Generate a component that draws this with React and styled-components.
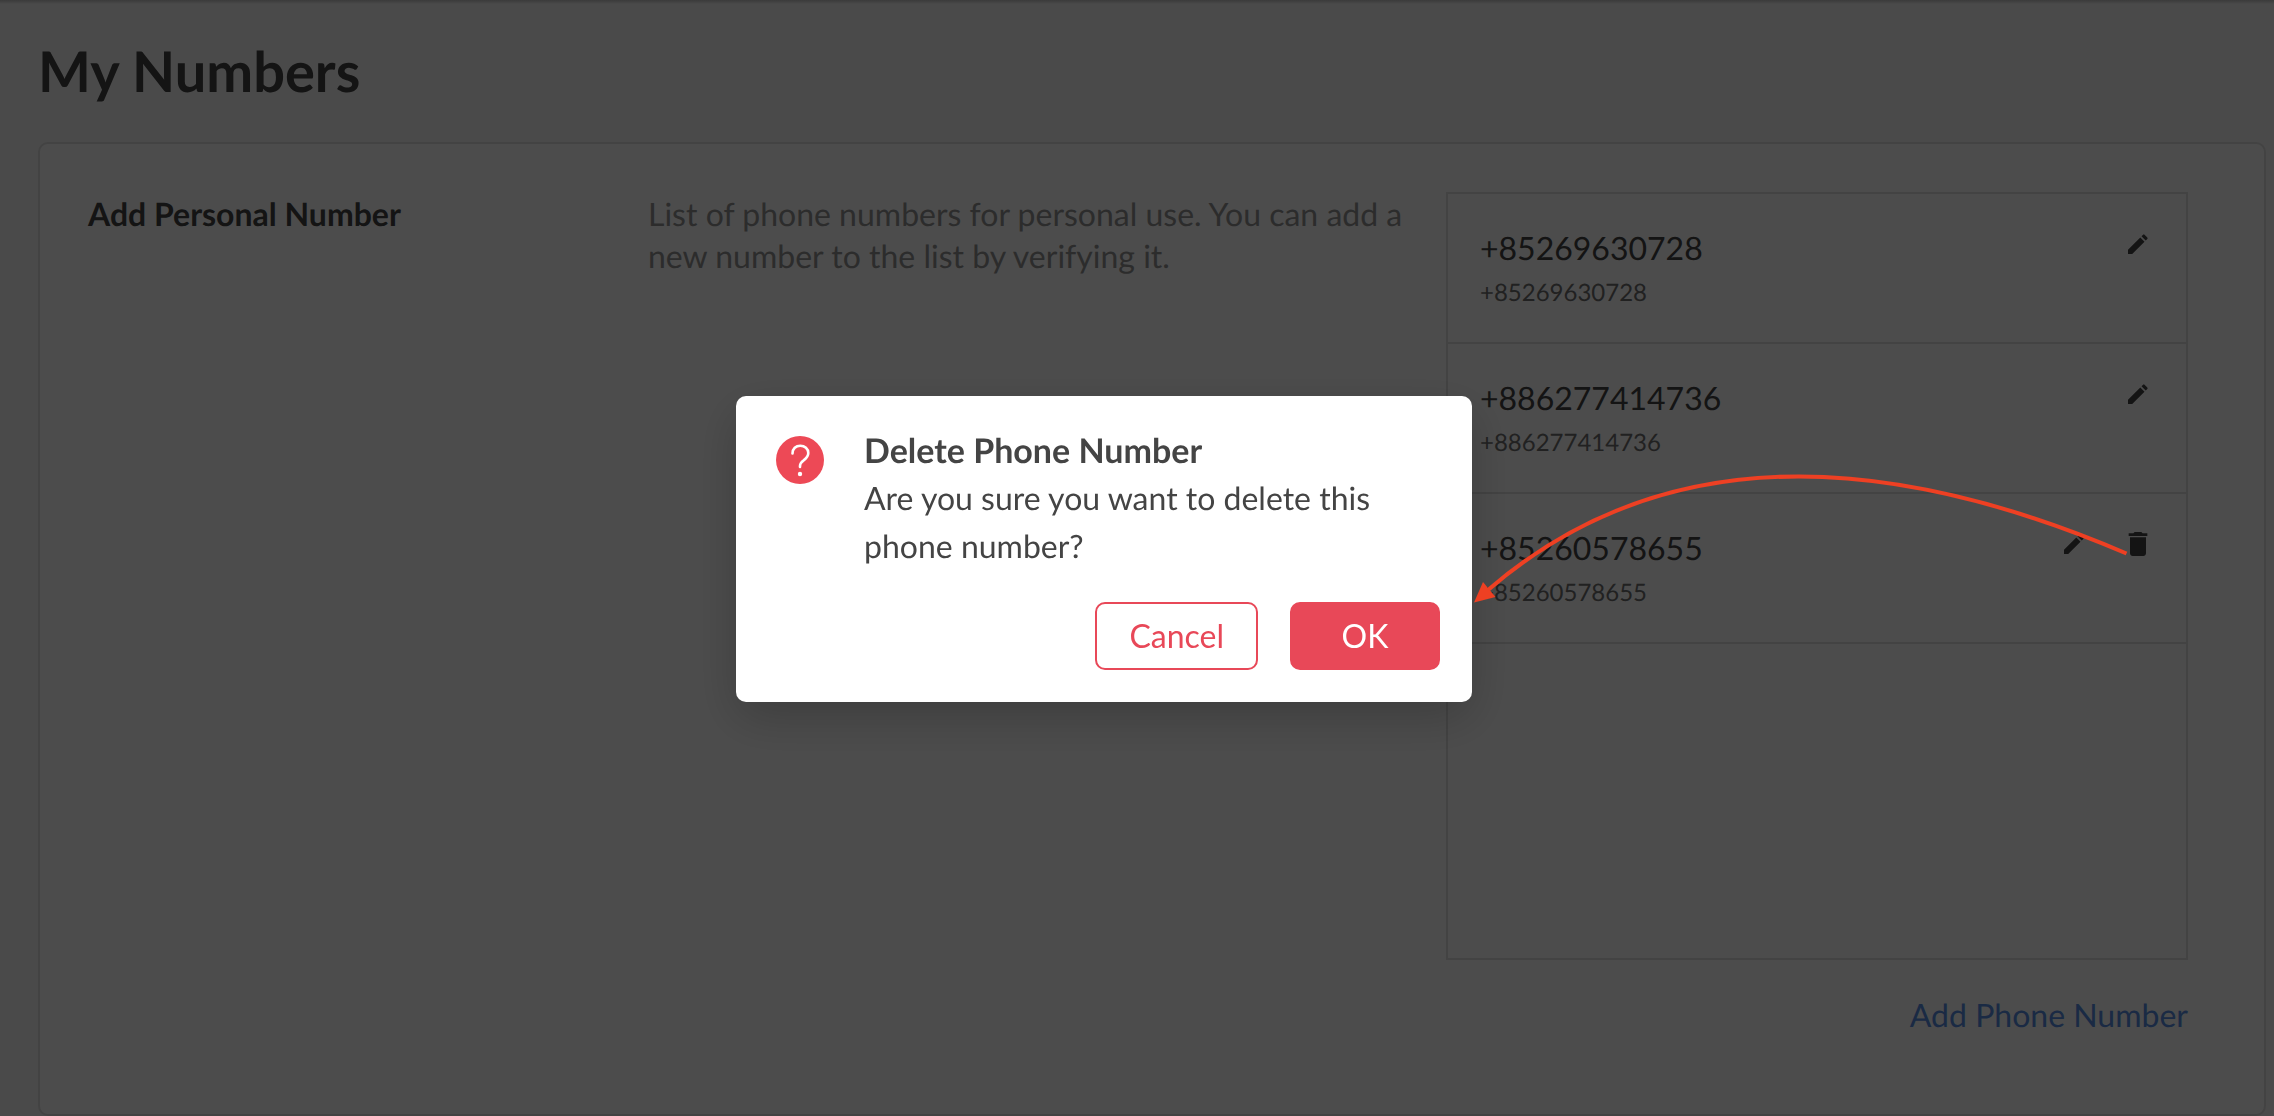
import React from "react";
import styled, { createGlobalStyle } from "styled-components";

const Global = createGlobalStyle`
  *, *::before, *::after { box-sizing: border-box; }
  body {
    margin: 0;
    background: #f8f8f8;
    color: #444;
    font: 32px/42px Lato, sans-serif;
    text-rendering: geometricPrecision;
  }
  h1, h2, p, ul { margin: 0; padding: 0; }
  button { font: inherit; cursor: pointer; }
`;

const Page = styled.main`
  padding: 0 8px 0 38px;
  background: linear-gradient(#c4c4c4, #f8f8f8 4px);
`;

const PageTitle = styled.h1`
  padding: 36px 0;
  font-size: 56px;
  line-height: 70px;
  font-weight: 700;
`;

const Card = styled.section`
  display: grid;
  grid-template-columns: 560fr 798fr 742fr;
  padding: 48px 76px 78px 48px;
  background: #fff;
  border: 2px solid #e0e0e0;
  border-radius: 10px;
`;

const SectionTitle = styled.h2`
  && { padding: 1px 28px 0 0; }
  font-size: 32px;
  line-height: 42px;
  font-weight: 700;
`;

const Description = styled.p`
  && { padding: 1px 28px 0 0; }
  color: #959595;
`;

const ListColumn = styled.div`
  display: flex;
  flex-direction: column;
  align-items: flex-end;
  gap: 34px;
`;

const NumberList = styled.ul`
  width: 100%;
  min-height: 768px;
  list-style: none;
  border: 2px solid #e0e0e0;
`;

const NumberRow = styled.li`
  display: flex;
  justify-content: space-between;
  align-items: flex-start;
  padding: 32px 32px 26px;
  border-bottom: 2px solid #e0e0e0;
`;

const NumberName = styled.p`
  line-height: 44px;
`;

const NumberDetail = styled.p`
  color: #707070;
  font-size: 24px;
  line-height: 46px;
`;

const Actions = styled.div`
  display: flex;
  gap: 32px;
`;

const IconButton = styled.button`
  display: flex;
  padding: 2px 0;
  color: #444;
  background: none;
  border: 0;
`;

const AddLink = styled.a`
  color: #588ee4;
  text-decoration: none;
`;

const Overlay = styled.div`
  position: fixed;
  inset: 0;
  display: flex;
  align-items: center;
  justify-content: center;
  padding: 0 66px 18px 0;
  background: rgba(0, 0, 0, 0.7);
`;

const Dialog = styled.div`
  position: relative;
  width: 736px;
  padding: 32px;
  background: #fff;
  border-radius: 10px;
  box-shadow: 0 16px 48px rgba(0, 0, 0, 0.2);
`;

const DialogBody = styled.div`
  display: flex;
  align-items: flex-start;
  gap: 40px;
  padding: 0 8px 32px;
`;

const QuestionIcon = styled.svg`
  flex: none;
  width: 48px;
  margin-top: 8px;
`;

const DialogTitle = styled.h2`
  font-size: 34px;
  line-height: 46px;
  font-weight: 700;
`;

const DialogText = styled.p`
  line-height: 48px;
`;

const DialogActions = styled.div`
  display: flex;
  justify-content: flex-end;
  gap: 32px;
`;

const DialogButton = styled.button`
  min-width: 150px;
  height: 68px;
  padding: 0 32px;
  color: ${(p) => (p.$primary ? "#fff" : "#e84858")};
  background: ${(p) => (p.$primary ? "#e84858" : "#fff")};
  border: 2px solid #e84858;
  border-radius: 10px;
`;

const Arrow = styled.svg`
  position: absolute;
  left: 100%;
  top: 0;
  width: 660px;
  height: 220px;
  pointer-events: none;
`;

const PencilIcon = () => (
  <svg width="32" height="32" viewBox="0 0 32 32" fill="currentColor" aria-hidden="true">
    <path d="M6 26v-4.2L18.3 9.5l4.2 4.2L10.200 26zM19.500 8.300l1.600-1.600q.7-.7 1.400 0l2.800 2.800q.7.7 0 1.400l-1.600 1.600z" />
  </svg>
);

const TrashIcon = () => (
  <svg width="32" height="32" viewBox="0 0 24 24" fill="currentColor" aria-hidden="true">
    <path d="M6 19c0 1.100.9 2 2 2h8c1.100 0 2-.9 2-2V7H6zM19 4h-3.500l-1-1h-5l-1 1H5v2h14z" />
  </svg>
);

const numbers = [
  { number: "+85269630728" },
  { number: "+886277414736" },
  { number: "+85260578655", removable: true },
];

export default function App() {
  return (
    <>
      <Global />
      <Page>
        <PageTitle>My Numbers</PageTitle>
        <Card>
          <SectionTitle>Add Personal Number</SectionTitle>
          <Description>
            List of phone numbers for personal use. You can add a new number to the list by verifying it.
          </Description>
          <ListColumn>
            <NumberList>
              {numbers.map(({ number, removable }) => (
                <NumberRow key={number}>
                  <div>
                    <NumberName>{number}</NumberName>
                    <NumberDetail>{number}</NumberDetail>
                  </div>
                  <Actions>
                    <IconButton type="button" aria-label="Edit"><PencilIcon /></IconButton>
                    {removable && (
                      <IconButton type="button" aria-label="Delete"><TrashIcon /></IconButton>
                    )}
                  </Actions>
                </NumberRow>
              ))}
            </NumberList>
            <AddLink href="#add">Add Phone Number</AddLink>
          </ListColumn>
        </Card>
      </Page>
      <Overlay>
        <Dialog role="dialog" aria-modal="true" aria-labelledby="dialog-title">
          <DialogBody>
            <QuestionIcon viewBox="0 0 48 48" aria-hidden="true">
              <circle cx="24" cy="24" r="24" fill="#ed4956" />
              <path d="M16.500 17.500c0-4.800 3.400-7.800 7.800-7.800s8 2.800 8 7.300c0 3.800-2.300 5.500-4.500 7.200-2.300 1.700-3.800 3-3.800 5.800v1" fill="none" stroke="#fff" strokeWidth="2.600" strokeLinecap="round" />
              <circle cx="24" cy="38" r="2.200" fill="#fff" />
            </QuestionIcon>
            <div>
              <DialogTitle id="dialog-title">Delete Phone Number</DialogTitle>
              <DialogText>Are you sure you want to delete this phone number?</DialogText>
            </div>
          </DialogBody>
          <DialogActions>
            <DialogButton type="button">Cancel</DialogButton>
            <DialogButton type="button" $primary>OK</DialogButton>
          </DialogActions>
          <Arrow viewBox="0 0 660 220" aria-hidden="true">
            <path d="M654.500 157.500Q256-13 16 194" fill="none" stroke="#ee4023" strokeWidth="4" />
            <path d="M2 206.500L11 186L23.500 201z" fill="#ee4023" />
          </Arrow>
        </Dialog>
      </Overlay>
    </>
  );
}
